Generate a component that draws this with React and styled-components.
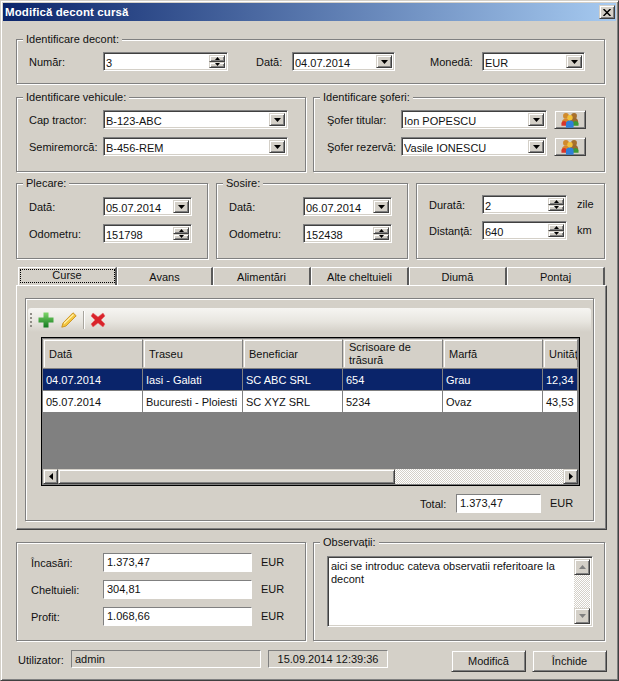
import React from "react";
import styled, { createGlobalStyle, css } from "styled-components";

const Global = createGlobalStyle`
  html, body { margin: 0; padding: 0; background: #d4d0c8; }
  body { font: 11px/13px "Liberation Sans", Arial, sans-serif; color: #111; }
  * { box-sizing: border-box; }
`;

const raised = css`
  background: #d4d0c8;
  border: 1px solid;
  border-color: #d4d0c8 #404040 #404040 #d4d0c8;
  box-shadow: inset 1px 1px 0 #fff, inset -1px -1px 0 #808080;
`;
const sunken = css`
  border: 1px solid;
  border-color: #808080 #fff #fff #808080;
  box-shadow: inset 1px 1px 0 #404040, inset -1px -1px 0 #d4d0c8;
`;
const checker = css`
  background: repeating-conic-gradient(#fff 0 25%, #d4d0c8 0 50%) 0 0 / 2px 2px;
`;

const Window = styled.div`
  width: 619px;
  height: 681px;
  padding: 2px;
  background: #d4d0c8;
  border: 1px solid;
  border-color: #d4d0c8 #404040 #404040 #d4d0c8;
  box-shadow: inset 1px 1px 0 #fff, inset -1px -1px 0 #808080;
  overflow: hidden;
`;
const TitleBar = styled.div`
  height: 18px;
  padding: 0 1px 0 2px;
  display: flex;
  align-items: center;
  justify-content: space-between;
  background: linear-gradient(90deg, #0a246a, #a6caf0);
`;
const TitleText = styled.div`
  font-weight: bold;
  font-size: 11.5px;
  letter-spacing: 0.1px;
  color: #fff;
`;
const CloseButton = styled.div`
  ${raised}
  width: 16px;
  height: 14px;
  display: flex;
  align-items: center;
  justify-content: center;
`;
const Body = styled.div`
  padding: 0 11px 0 13px;
`;
const Row = styled.div`
  display: flex;
  gap: ${p => p.$gap ?? 0}px;
  margin-top: ${p => p.$top}px;
`;
const Group = styled.div`
  position: relative;
  width: ${p => p.$w}px;
  height: ${p => p.$h}px;
  padding: ${p => p.$pt}px 0 0 ${p => p.$pl}px;
  border: 1px solid #808080;
  box-shadow: 1px 1px 0 #fff, inset 1px 1px 0 #fff;
  display: flex;
  flex-direction: column;
  gap: ${p => p.$gap ?? 8}px;
`;
const Legend = styled.div`
  position: absolute;
  top: -7px;
  left: 6px;
  padding: 0 3px;
  background: #d4d0c8;
  white-space: nowrap;
`;
const Line = styled.div`
  display: flex;
  align-items: center;
  height: ${p => p.$h ?? 19}px;
`;
const Label = styled.div`
  width: ${p => p.$w}px;
  margin-left: ${p => p.$ml ?? 0}px;
  padding-top: 1px;
  flex: none;
  white-space: nowrap;
`;
const Field = styled.div`
  ${sunken}
  width: ${p => p.$w}px;
  height: 19px;
  flex: none;
  display: flex;
  align-items: stretch;
  padding: 2px;
  background: #fff;
`;
const Value = styled.div`
  flex: 1;
  padding: 2px 0 0 0;
  white-space: nowrap;
  overflow: hidden;
`;
const ComboBtn = styled.div`
  ${raised}
  width: 16px;
  flex: none;
  display: flex;
  align-items: center;
  justify-content: center;
`;
const Spin = styled.div`
  width: 16px;
  flex: none;
  display: flex;
  flex-direction: column;
`;
const SpinBtn = styled.div`
  ${raised}
  flex: 1;
  display: flex;
  align-items: center;
  justify-content: center;
`;
const IconBtn = styled.div`
  ${raised}
  width: 32px;
  height: 19px;
  margin-left: 7px;
  display: flex;
  align-items: center;
  justify-content: center;
`;
const Suffix = styled.div`
  margin-left: 10px;
`;
const Tabs = styled.div`
  display: flex;
  margin-top: 8px;
  padding-left: 2px;
  height: 18px;
`;
const Tab = styled.div`
  width: ${p => p.$w}px;
  flex: none;
  display: flex;
  align-items: center;
  justify-content: center;
  padding: ${p => (p.$active ? "0 0 3px" : "2px 0 0")};
  background: #d4d0c8;
  border-top: 1px solid #fff;
  border-left: 1px solid #fff;
  border-right: 2px solid #5a5a5a;
  outline: ${p => (p.$active ? "1px dotted #000" : "none")};
  outline-offset: -3px;
`;
const Panel = styled.div`
  width: 591px;
  height: 245px;
  padding: 12px 0 0 8px;
  border: 1px solid;
  border-color: #fff #404040 #404040 #fff;
  box-shadow: inset -1px -1px 0 #808080;
`;
const InnerGroup = styled.div`
  width: 569px;
  height: 223px;
  padding: 9px 2px 0;
  border: 1px solid #808080;
  box-shadow: 1px 1px 0 #fff, inset 1px 1px 0 #fff;
`;
const Toolbar = styled.div`
  height: 24px;
  display: flex;
  align-items: center;
  padding-left: 2px;
  border-radius: 3px 3px 0 0;
  background: linear-gradient(180deg, #f6f5f2, #e8e6e0 55%, #d4d0c8);
`;
const Grip = styled.div`
  width: 2px;
  height: 15px;
  margin-right: 6px;
  background: repeating-linear-gradient(180deg, #8f8d86 0 2px, transparent 2px 4px);
`;
const ToolSep = styled.div`
  width: 1px;
  height: 18px;
  margin: 0 6px 0 6px;
  background: #a8a59d;
  box-shadow: 1px 0 0 #fff;
`;
const ToolIcon = styled.svg`
  width: 16px;
  height: 16px;
  margin-right: ${p => p.$mr ?? 0}px;
  flex: none;
`;
const GridBox = styled.div`
  width: 539px;
  height: 149px;
  margin: 5px 0 0 13px;
  padding: 1px;
  display: flex;
  flex-direction: column;
  border: 1px solid #000;
  box-shadow: inset 1px 1px 0 #808080, inset -1px -1px 0 #808080;
  background: #808080;
`;
const GridRow = styled.div`
  display: grid;
  grid-template-columns: 100px 100px 100px 100px 100px 35px;
  height: ${p => p.$h}px;
  flex: none;
  background: ${p => (p.$selected ? "#0a246a" : "#fff")};
  color: ${p => (p.$selected ? "#fff" : "#111")};
  margin-bottom: 1px;
`;
const HeadCell = styled.div`
  ${raised}
  border-color: #d4d0c8 #808080 #d4d0c8 #d4d0c8;
  box-shadow: inset 1px 1px 0 #fff;
  display: flex;
  align-items: center;
  padding: 1px 0 0 5px;
  white-space: ${p => (p.$wrap ? "normal" : "nowrap")};
  overflow: hidden;
`;
const Cell = styled.div`
  border-right: 1px solid #808080;
  padding: 5px 0 0 3px;
  white-space: nowrap;
  overflow: hidden;
`;
const GridFill = styled.div`
  flex: 1;
`;
const HScroll = styled.div`
  height: 15px;
  flex: none;
  display: flex;
`;
const ScrollBtn = styled.div`
  ${raised}
  width: ${p => p.$w ?? 15}px;
  height: ${p => p.$h ?? 15}px;
  flex: none;
  display: flex;
  align-items: center;
  justify-content: center;
`;
const Thumb = styled.div`
  ${raised}
  width: 337px;
  flex: none;
`;
const Track = styled.div`
  ${checker}
  flex: 1;
`;
const TotalRow = styled.div`
  display: flex;
  align-items: center;
  height: 19px;
  margin-top: 8px;
  padding-left: 392px;
`;
const Flat = styled.div`
  width: ${p => p.$w}px;
  height: ${p => p.$h ?? 19}px;
  flex: none;
  padding-left: ${p => p.$pl ?? 3}px;
  display: flex;
  align-items: center;
  justify-content: ${p => (p.$center ? "center" : "flex-start")};
  background: ${p => (p.$grey ? "#d4d0c8" : "#fff")};
  border: 1px solid;
  border-color: #808080 #fff #fff #808080;
`;
const Unit = styled.div`
  margin-left: ${p => p.$ml}px;
`;
const Memo = styled.div`
  ${sunken}
  width: 266px;
  height: 71px;
  padding: 2px;
  display: flex;
  background: #fff;
`;
const MemoText = styled.div`
  flex: 1;
  padding: 1px 1px;
  color: #111;
`;
const VScroll = styled.div`
  width: 16px;
  flex: none;
  display: flex;
  flex-direction: column;
`;
const VTrack = styled.div`
  ${checker}
  flex: 1;
`;
const Footer = styled.div`
  display: flex;
  align-items: flex-start;
  margin-top: 9px;
  padding-left: 2px;
`;
const FooterLabel = styled.div`
  width: 53px;
  flex: none;
  padding-top: 4px;
`;
const Spacer = styled.div`
  width: ${p => p.$w}px;
  flex: none;
`;
const Button = styled.div`
  ${raised}
  width: 75px;
  height: 22px;
  margin-right: ${p => p.$mr ?? 0}px;
  flex: none;
  display: flex;
  align-items: center;
  justify-content: center;
`;

const Arrow = ({ d = "down", s = 7, c = "#000" }) => {
  const h = Math.ceil(s / 2);
  const pts = {
    down: `0,0 ${s},0 ${s / 2},${h}`,
    up: `0,${h} ${s},${h} ${s / 2},0`
  };
  if (d === "left" || d === "right") {
    const p = d === "left" ? `${h},0 ${h},${s} 0,${s / 2}` : `0,0 0,${s} ${h},${s / 2}`;
    return <svg width={h} height={s}><polygon points={p} fill={c} /></svg>;
  }
  return <svg width={s} height={h}><polygon points={pts[d]} fill={c} /></svg>;
};

const Combo = ({ w, value }) => (
  <Field $w={w}>
    <Value>{value}</Value>
    <ComboBtn><Arrow /></ComboBtn>
  </Field>
);
const Spinner = ({ w, value }) => (
  <Field $w={w}>
    <Value>{value}</Value>
    <Spin>
      <SpinBtn><Arrow d="up" s={5} /></SpinBtn>
      <SpinBtn><Arrow d="down" s={5} /></SpinBtn>
    </Spin>
  </Field>
);

const People = () => (
  <svg width="18" height="16" viewBox="0 0 20 17">
    <circle cx="5.500" cy="4" r="3.200" fill="#d08a2c" />
    <circle cx="14.500" cy="4" r="3.200" fill="#a8702c" />
    <path d="M1 11c0-3 2-4 5-4s4 2 4 4v2H1z" fill="#d9862a" />
    <path d="M10 10c0-3 2-4 4.500-4S19 8 19 10v3h-9z" fill="#9a6a30" />
    <circle cx="10" cy="6" r="3" fill="#f2c23a" />
    <path d="M0.500 12.500c0-2 1.500-3 3-3s3 1 3 3v2.500h-6z" fill="#d8362a" />
    <path d="M13 12.500c0-2 1.500-3 3-3s3.500 1 3.500 3V15H13z" fill="#3c9a34" />
    <path d="M5.500 12.500c0-2.500 2-3.500 4.500-3.500s4 1 4 3.500V17H5.500z" fill="#2f7fd8" />
  </svg>
);

const heads = ["Dată", "Traseu", "Beneficiar", "Scrisoare de trăsură", "Marfă", "Unități"];
const rows = [
  ["04.07.2014", "Iasi - Galati", "SC ABC SRL", "654", "Grau", "12,34"],
  ["05.07.2014", "Bucuresti - Ploiesti", "SC XYZ SRL", "5234", "Ovaz", "43,53"]
];

export default function App() {
  return (
    <Window>
      <Global />
      <TitleBar>
        <TitleText>Modifică decont cursă</TitleText>
        <CloseButton>
          <svg width="8" height="7" viewBox="0 0 8 7">
            <path d="M0.500 0L7.500 7M7.500 0L0.500 7" stroke="#000" strokeWidth="1.500" />
          </svg>
        </CloseButton>
      </TitleBar>
      <Body>
        <Row $top={18}>
          <Group $w={589} $h={45} $pt={12} $pl={12}>
            <Legend>Identificare decont:</Legend>
            <Line>
              <Label $w={74}>Număr:</Label>
              <Spinner w={125} value="3" />
              <Label $w={36} $ml={28}>Dată:</Label>
              <Combo w={103} value="04.07.2014" />
              <Label $w={52} $ml={35}>Monedă:</Label>
              <Combo w={103} value="EUR" />
            </Line>
          </Group>
        </Row>
        <Row $top={13} $gap={7}>
          <Group $w={290} $h={75} $pt={12} $pl={12}>
            <Legend>Identificare vehicule:</Legend>
            <Line>
              <Label $w={74}>Cap tractor:</Label>
              <Combo w={185} value="B-123-ABC" />
            </Line>
            <Line>
              <Label $w={74}>Semiremorcă:</Label>
              <Combo w={185} value="B-456-REM" />
            </Line>
          </Group>
          <Group $w={292} $h={75} $pt={12} $pl={13}>
            <Legend>Identificare şoferi:</Legend>
            <Line>
              <Label $w={74}>Şofer titular:</Label>
              <Combo w={146} value="Ion POPESCU" />
              <IconBtn><People /></IconBtn>
            </Line>
            <Line>
              <Label $w={74}>Şofer rezervă:</Label>
              <Combo w={146} value="Vasile IONESCU" />
              <IconBtn><People /></IconBtn>
            </Line>
          </Group>
        </Row>
        <Row $top={11} $gap={8}>
          <Group $w={192} $h={76} $pt={13} $pl={12}>
            <Legend>Plecare:</Legend>
            <Line>
              <Label $w={74}>Dată:</Label>
              <Combo w={89} value="05.07.2014" />
            </Line>
            <Line>
              <Label $w={74}>Odometru:</Label>
              <Spinner w={89} value="151798" />
            </Line>
          </Group>
          <Group $w={192} $h={76} $pt={13} $pl={12}>
            <Legend>Sosire:</Legend>
            <Line>
              <Label $w={74}>Dată:</Label>
              <Combo w={89} value="06.07.2014" />
            </Line>
            <Line>
              <Label $w={74}>Odometru:</Label>
              <Spinner w={89} value="152438" />
            </Line>
          </Group>
          <Group $w={189} $h={76} $pt={11} $pl={12} $gap={7}>
            <Line>
              <Label $w={53}>Durată:</Label>
              <Spinner w={85} value="2" />
              <Suffix>zile</Suffix>
            </Line>
            <Line>
              <Label $w={53}>Distanță:</Label>
              <Spinner w={85} value="640" />
              <Suffix>km</Suffix>
            </Line>
          </Group>
        </Row>
        <Tabs>
          <Tab $w={99} $active>Curse</Tab>
          <Tab $w={96}>Avans</Tab>
          <Tab $w={98}>Alimentări</Tab>
          <Tab $w={98}>Alte cheltuieli</Tab>
          <Tab $w={98}>Diumă</Tab>
          <Tab $w={98}>Pontaj</Tab>
        </Tabs>
        <Panel>
          <InnerGroup>
            <Toolbar>
              <Grip />
              <ToolIcon viewBox="0 0 16 16" $mr={7}>
                <defs>
                  <linearGradient id="plus" x1="0" y1="0" x2="0" y2="1">
                    <stop offset="0" stopColor="#7fd66a" />
                    <stop offset="1" stopColor="#127a1e" />
                  </linearGradient>
                </defs>
                <path d="M5.500 0.500h5v5h5v5h-5v5h-5v-5h-5v-5h5z" fill="url(#plus)" />
              </ToolIcon>
              <ToolIcon viewBox="0 0 16 16">
                <path d="M12 0.800l3.200 3L5 14 0.800 15.200 2 11z" fill="#f3c63f" stroke="#c98f1c" strokeWidth="0.900" />
                <path d="M3 11.500l9.500-9" stroke="#fff2b0" strokeWidth="1.100" />
              </ToolIcon>
              <ToolSep />
              <ToolIcon viewBox="0 0 16 16">
                <path d="M3 1l5 4 5-4 2 3-4 4 4 4-2 3-5-4-5 4-2-3 4-4-4-4z" fill="#d9232a" stroke="#e8686c" strokeWidth="0.500" />
              </ToolIcon>
            </Toolbar>
            <GridBox>
              <GridRow $h={29}>
                {heads.map((t, i) => (
                  <HeadCell key={t} $wrap={i === 3}>{t}</HeadCell>
                ))}
              </GridRow>
              {rows.map((r, i) => (
                <GridRow key={r[0]} $h={21} $selected={i === 0}>
                  {r.map((c, j) => <Cell key={j}>{c}</Cell>)}
                </GridRow>
              ))}
              <GridFill />
              <HScroll>
                <ScrollBtn><Arrow d="left" /></ScrollBtn>
                <Thumb />
                <Track />
                <ScrollBtn><Arrow d="right" /></ScrollBtn>
              </HScroll>
            </GridBox>
            <TotalRow>
              <Label $w={36}>Total:</Label>
              <Flat $w={85}>1.373,47</Flat>
              <Unit $ml={9}>EUR</Unit>
            </TotalRow>
          </InnerGroup>
        </Panel>
        <Row $top={12} $gap={7}>
          <Group $w={290} $h={99} $pt={10} $pl={14}>
            <Line>
              <Label $w={72}>Încasări:</Label>
              <Flat $w={149}>1.373,47</Flat>
              <Unit $ml={9}>EUR</Unit>
            </Line>
            <Line>
              <Label $w={72}>Cheltuieli:</Label>
              <Flat $w={149}>304,81</Flat>
              <Unit $ml={9}>EUR</Unit>
            </Line>
            <Line>
              <Label $w={72}>Profit:</Label>
              <Flat $w={149}>1.068,66</Flat>
              <Unit $ml={9}>EUR</Unit>
            </Line>
          </Group>
          <Group $w={292} $h={99} $pt={13} $pl={13}>
            <Legend>Observații:</Legend>
            <Memo>
              <MemoText>aici se introduc cateva observatii referitoare la decont</MemoText>
              <VScroll>
                <ScrollBtn $w={16} $h={16}><Arrow d="up" c="#808080" /></ScrollBtn>
                <VTrack />
                <ScrollBtn $w={16} $h={16}><Arrow d="down" c="#808080" /></ScrollBtn>
              </VScroll>
            </Memo>
          </Group>
        </Row>
        <Footer>
          <FooterLabel>Utilizator:</FooterLabel>
          <Flat $w={190} $h={18} $grey>admin</Flat>
          <Spacer $w={7} />
          <Flat $w={120} $h={18} $grey $center $pl={0}>15.09.2014 12:39:36</Flat>
          <Spacer $w={63} />
          <Button $mr={6}>Modifică</Button>
          <Button>Închide</Button>
        </Footer>
      </Body>
    </Window>
  );
}
